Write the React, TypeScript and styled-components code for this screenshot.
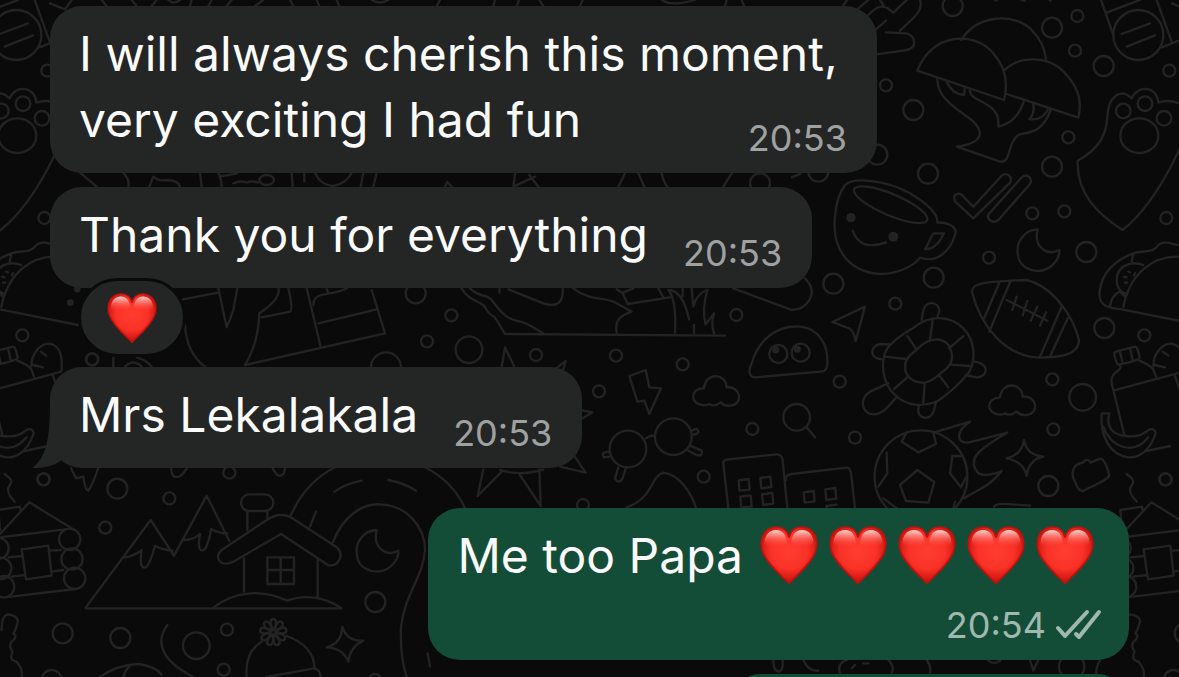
import React from "react";
import styled, { createGlobalStyle, css } from "styled-components";

const GlobalStyle = createGlobalStyle`
  *, *::before, *::after { box-sizing: border-box; }
  body {
    margin: 0;
    background: #0a0a0a;
    font-family: Inter, "Liberation Sans", sans-serif;
  }
`;

const Chat = styled.main`
  position: relative;
  height: 100vh;
  overflow: hidden;
  background: #0a0a0a;
`;

const WallpaperSvg = styled.svg`
  position: absolute;
  inset: 0;
  width: 100%;
  height: 100%;
  fill: none;
  stroke: #232323;
  stroke-width: 7;
  stroke-linecap: round;
  stroke-linejoin: round;
`;

const MessageList = styled.ol`
  position: relative;
  display: flex;
  flex-direction: column;
  gap: 14px;
  margin: 0;
  padding: 6px 50px 0;
  list-style: none;
`;

const MessageRow = styled.li<{ $outgoing?: boolean; $spaced?: boolean }>`
  display: flex;
  flex-direction: column;
  align-items: ${(p) => (p.$outgoing ? "flex-end" : "flex-start")};
  ${(p) => p.$spaced && css`margin-top: 26px;`}
`;

const Bubble = styled.article<{ $outgoing?: boolean; $layout?: "inline" | "multiline" | "stacked" }>`
  position: relative;
  display: grid;
  max-width: min(827px, 100%);
  padding: 15px 30px 20px 29px;
  border-radius: 32px;
  color: #fbfbfb;
  background: ${(p) => (p.$outgoing ? "#144d37" : "#242626")};
  ${(p) =>
    (p.$layout ?? "inline") === "inline" &&
    css`
      grid-template-columns: auto auto;
      column-gap: 35px;
    `}
  ${(p) =>
    p.$layout === "multiline" &&
    css`
      width: 827px;
      grid-template-columns: 1fr auto;
      & > :first-child { grid-column: 1 / -1; }
    `}
  ${(p) => p.$layout === "stacked" && css`row-gap: 22px;`}
`;

const NextBubble = styled.div`
  width: 400px;
  height: 101px;
  border-radius: 32px;
  background: #144d37;
`;

const Text = styled.p`
  display: flex;
  align-items: center;
  margin: 0;
  font-size: 48px;
  line-height: 66px;
`;

const Meta = styled.footer<{ $outgoing?: boolean }>`
  display: flex;
  align-items: center;
  justify-self: end;
  align-self: end;
  gap: 9px;
  font-size: 36px;
  line-height: 29px;
  color: ${(p) => (p.$outgoing ? "#a1b8af" : "#a0a1a1")};
`;

const EmojiRun = styled.span`
  display: inline-flex;
  margin: 0 0 2px 11px;
`;

const HeartSlot = styled.span<{ $small?: boolean }>`
  display: flex;
  justify-content: center;
  width: ${(p) => (p.$small ? 50 : 69)}px;
  svg { display: block; width: ${(p) => (p.$small ? 50 : 58)}px; height: ${(p) => (p.$small ? 50 : 58)}px; }
`;

const Reaction = styled.button`
  z-index: 1;
  display: flex;
  align-items: center;
  justify-content: center;
  width: 108px;
  height: 79px;
  margin: -10px 0 -4px 28px;
  padding: 0;
  border: 3px solid #0a0a0a;
  border-radius: 40px;
  background: #242626;
`;

const TailSvg = styled.svg`
  position: absolute;
  left: -18px;
  bottom: 0;
  width: 52px;
  height: 65px;
  fill: #242626;
`;

const ChecksSvg = styled.svg`
  width: 46px;
  height: 29px;
  margin-right: -2px;
  overflow: visible;
  fill: none;
  stroke: currentColor;
  stroke-width: 4;
  stroke-linecap: round;
  stroke-linejoin: round;
`;

const HEART =
  "M85 170C76 158 22 118 7 76C-6 36 14 3 48 3C66 3 80 14 85 34C90 14 104 3 122 3C156 3 176 36 163 76C148 118 94 158 85 170Z";

function HeartDefs() {
  return (
    <svg width="0" height="0" aria-hidden="true" style={{ position: "absolute" }}>
      <defs>
        <radialGradient id="heartBody" cx="50%" cy="42%" r="60%">
          <stop offset="0" stopColor="#ff3d32" />
          <stop offset="0.55" stopColor="#fa3227" />
          <stop offset="1" stopColor="#bd0c08" />
        </radialGradient>
        <linearGradient id="heartShine" x1="0" y1="0" x2="0" y2="1">
          <stop offset="0" stopColor="#ffe0dc" stopOpacity="0.95" />
          <stop offset="0.45" stopColor="#ff8f86" stopOpacity="0.6" />
          <stop offset="1" stopColor="#ff4238" stopOpacity="0" />
        </linearGradient>
      </defs>
    </svg>
  );
}

function Heart({ small }: { small?: boolean }) {
  return (
    <HeartSlot $small={small}>
      <svg viewBox="0 0 170 172" role="img" aria-label="Red heart">
        <path d={HEART} fill="url(#heartBody)" stroke="#c4100b" strokeWidth="5" />
        <path d="M12 54C12 27 26 12 47 12C66 12 77 27 79 52C60 64 27 66 12 54Z" fill="url(#heartShine)" />
        <path d="M158 54C158 27 144 12 123 12C104 12 93 27 91 52C110 64 143 66 158 54Z" fill="url(#heartShine)" />
      </svg>
    </HeartSlot>
  );
}

/* Doodles are drawn on a grid three times finer than the page. */
function Patch({ x, y, children }: { x: number; y: number; children: React.ReactNode }) {
  return <g transform={`translate(${x} ${y}) scale(0.33333)`}>{children}</g>;
}

function Rings({ r, at }: { r: number; at: [number, number][] }) {
  return (
    <>
      {at.map(([cx, cy]) => (
        <circle key={`${cx}-${cy}`} cx={cx} cy={cy} r={r} />
      ))}
    </>
  );
}

const MOON = "M713 688C670 690 645 730 655 770C660 800 690 812 715 813C750 812 780 780 778 750C740 770 700 740 713 688Z";
const CLOUD =
  "M595 523C560 520 555 475 600 472C605 425 665 425 668 470C710 465 720 520 680 525C665 527 655 520 650 515C635 527 620 525 617 520Q608 525 595 523Z";

function Wallpaper() {
  return (
    <WallpaperSvg viewBox="0 0 1179 677" preserveAspectRatio="xMinYMin slice" aria-hidden="true">
      <defs>
        <g id="doodles">
          <Patch x={0} y={0}>
            <path d="M305 0L320 18M395 0L410 18M455 18L470 0M505 0Q520 15 540 0M575 0L570 18M625 18L635 0M680 18L695 0M765 18L790 0M870 0L880 18M950 0L958 18M1010 0L1018 18M1115 0Q1140 15 1165 0" />
            <path d="M150 10L195 28L215 0" />
            <path d="M240 518L290 560M370 518Q390 540 385 560M448 560L460 530Q475 545 500 540Q535 540 540 560M600 518L605 560M655 518Q665 540 665 560M665 528Q690 525 710 520M700 550Q720 540 740 548Q755 540 775 548M875 520L878 560M913 520V545M945 518Q960 555 1000 558Q1040 550 1055 518M1090 518L1082 560M1130 518L1120 560" />
            <ellipse cx="800" cy="540" rx="22" ry="15" />
          </Patch>
          <Patch x={400} y={0}>
            <path d="M110 18L120 0M280 18L285 0M350 18L357 0M418 0L430 18M540 18L548 0M785 0Q815 20 885 0M975 18L980 0M1025 0L1032 18" />
            <path d="M345 520L340 560L405 530M388 525L415 560M135 560L142 545L155 560M655 560L675 520M715 520L733 560M785 520Q790 545 802 560M970 560L995 520M1175 532L1200 522" />
            <circle cx="1080" cy="550" r="30" />
          </Patch>

          <Patch x={800} y={0}>
            <Rings r={18} at={[[258, 256], [832, 48], [825, 152], [805, 412], [697, 640], [793, 634], [1108, 212], [1099, 654], [567, 773]]} />
            <Rings r={30} at={[[458, 18], [756, 83], [911, 198], [340, 330], [384, 521], [756, 500], [859, 756], [232, 464], [55, 515]]} />
            <circle cx="1015" cy="105" r="75" />
            <path d="M965 102L1050 70M980 140L1065 106M903 0L940 105M920 38L1020 0M1070 0L1115 125M1085 142L1150 116M585 0L590 2M665 0L675 2M748 0L752 2" />
            <path d="M130 15L142 0M175 25L205 0M205 45C240 10 250 20 262 24L280 38L320 0M240 0L250 15M360 0C370 30 350 45 300 92M257 97L320 100C350 110 350 145 320 150L230 163M228 88L258 62" />
            <path d="M352 212C395 100 520 90 580 160C615 200 625 250 612 300ZM484 120C530 45 640 35 695 90C725 120 735 150 738 178M612 212C660 165 750 165 800 225C840 270 845 310 835 353L620 282" />
            <path d="M412 235C410 300 480 330 520 365C555 400 545 430 470 440L600 485C635 490 620 430 655 405C680 395 725 405 752 330M440 245Q455 280 492 285L494 265M510 268C505 300 560 300 585 335Q597 350 595 380C640 370 660 340 672 302M700 312Q705 340 688 357C710 362 735 350 745 325" />
            <path d="M833 482C900 445 920 400 922 350C925 290 960 262 995 295C1010 255 1070 255 1075 308C1110 295 1170 310 1170 350C1165 400 1145 435 1130 465C1080 570 1020 650 968 690C890 640 830 580 833 482Z" />
            <Rings r={22} at={[[970, 333], [1035, 311], [1092, 355]]} />
            <ellipse cx="1018" cy="407" rx="57" ry="52" />
            <path d="M465 604C455 580 480 575 490 590L520 620L605 527C620 515 640 530 630 548L520 655ZM566 642L665 532C680 518 700 535 690 552L595 660C580 672 558 660 566 642Z" />
            <path d="M135 555C160 530 260 540 330 580C380 610 415 640 412 668C440 665 475 680 465 705C450 755 410 790 360 773C340 800 290 822 240 822C140 815 95 740 105 650C108 610 120 575 135 555Z" />
            <ellipse cx="272" cy="614" rx="119" ry="32" transform="rotate(23 272 614)" />
            <path d="M158 692Q180 755 258 727M400 700H432C420 725 400 750 375 747C385 735 390 715 400 700Z" />
            <g fill="#232323" stroke="none">
              <circle cx="153" cy="653" r="14" />
              <circle cx="280" cy="710" r="15" />
            </g>
            <path d={MOON} />
          </Patch>

          <Patch x={800} y={240}>
            <Rings r={30} at={[[100, 131], [401, 113], [913, 264], [745, 738]]} />
            <Rings r={18} at={[[286, 191], [119, 425], [757, 418], [760, 568], [1033, 286], [1097, 718], [165, 593], [1242, 358]]} />
            <circle cx="848" cy="472" r="40" />
            <path d="M900 150C905 100 945 60 1000 40C1030 30 1060 40 1075 15C1100 -5 1125 22 1150 15M900 150C890 200 930 205 965 208L1200 255M970 200C990 100 1060 45 1140 50M1030 75C990 60 950 80 950 120C950 140 960 155 975 160M930 198Q935 165 960 155L975 170M1000 40L995 65M972 110L980 112M985 95L990 97M975 128L982 128M1005 100L1002 106" />
            <path d="M517 160C512 130 540 125 680 120C760 140 820 230 837 300C835 350 770 352 720 353C610 350 540 250 517 160ZM600 124L550 240M632 122L568 275M785 200L720 350M803 235L750 350M620 180L742 242M650 170L637 210M682 183L668 226M712 200L692 242M738 217L720 257" />
            <path d="M97 246L195 200L167 303Q160 265 140 262Z" />
            <path d="M345 260C390 225 450 225 490 265C525 300 530 360 505 400C480 430 440 465 410 485C370 500 320 500 285 465C245 430 240 360 262 325C285 295 315 280 345 260ZM360 320C385 295 425 290 445 315C460 340 460 365 440 385C420 400 400 425 375 428C340 430 315 410 315 380C315 350 340 340 360 320Z" />
            <path d="M398 240L390 298M490 288L447 325M510 378L452 374M445 442L417 405M370 487L374 430M282 447L322 412M255 350L318 357M322 288L348 326M365 240L370 210C380 180 415 185 418 212L412 232M270 313L240 312C205 320 210 360 250 358M520 365C565 365 570 410 530 412L497 405M265 430L210 455C175 475 185 525 225 523C255 520 270 490 292 470M357 495C350 520 360 535 380 533C400 530 403 510 408 485" />
            <path d={CLOUD} />
            <circle cx="363" cy="710" r="139" />
            <path d="M320 577L305 605L355 637L408 612L400 577M352 690L403 726L385 788L318 783L300 735ZM260 638L262 700L235 740M487 648L457 648L450 700L483 742L499 710M250 775L290 805M465 785L460 805" />
            <path d="M400 578L510 545C470 570 465 610 505 608L622 578C530 630 500 660 535 700Q560 712 605 693C570 740 530 750 492 775" />
            <path d="M672 600Q680 645 730 650Q685 660 680 708Q672 665 620 655Q665 645 672 600Z" />
            <path d="M822 685C830 665 845 675 855 662Q865 655 872 668L900 656Q915 655 928 705C925 722 870 740 850 753Q835 755 825 725Q812 705 822 685M582 800Q590 790 620 792L690 797" />
            <path d="M943 342Q942 336 950 334L1005 320Q1012 318 1019 352Q1018 362 955 374Q948 372 943 342ZM960 336L968 368M990 325L998 360M960 375C970 395 930 390 935 430L973 585M1018 362Q1050 375 1060 388L1068 410M940 452L1150 395M1060 378C1060 340 1090 305 1120 312C1145 320 1155 350 1150 395M1088 335L1105 347M1065 375L1095 382M1125 408L1140 450M1040 633L1110 618" />
            <path d="M905 520H928Q915 570 960 585C1000 595 1030 585 1048 568Q1065 565 1067 580C1050 630 1020 655 985 652C930 645 900 590 905 520ZM910 560C930 620 1000 650 1045 592" />
            <path d="M980 702C1010 725 1000 725 990 745C990 770 1000 770 1010 785" />
          </Patch>

          <Patch x={400} y={260}>
            <Rings r={18} at={[[154, 166], [81, 244], [408, 285], [648, 287], [597, 394], [848, 313], [1009, 165], [1057, 507], [911, 650], [549, 735]]} />
            <circle cx="47" cy="100" r="30" />
            <circle cx="207" cy="269" r="40" />
            <path d="M1000 85L1175 150C1220 150 1260 100 1215 55" />
            <path d="M1065 352C1045 350 1045 330 1055 310C1075 240 1130 195 1200 200C1260 205 1285 260 1282 310Q1282 335 1262 335Z" />
            <Rings r={27} at={[[1135, 282], [1202, 278]]} />
            <g fill="#232323">
              <circle cx="1127" cy="270" r="7" />
              <circle cx="1192" cy="268" r="7" />
            </g>
            <path d={CLOUD} transform="translate(312 -88)" />
            <path d="M688 348L737 330L748 382L783 385L748 462L733 422L712 425Z" />
            <Rings r={55} at={[[684, 567], [820, 530]]} />
            <path d="M738 535Q750 525 765 528M875 512Q893 500 895 515Q890 525 878 524M870 557L905 572Q910 590 890 585L865 572M655 622L645 655Q655 675 668 655L678 622M630 575Q600 575 612 592L630 590" />
            <circle cx="1190" cy="472" r="40" />
            <path d="M1220 502L1245 532" />
            <path d="M315 222L975 227M185 85C210 130 250 120 260 150C275 175 280 160 290 180L315 222M210 85C240 115 260 100 275 120C320 180 330 175 350 182C390 190 400 205 430 220M325 88L430 130C480 145 490 120 488 85M298 85V98M520 85C570 125 620 110 650 130L695 155C650 170 645 190 650 218M650 88L668 100L683 132L810 112M668 98L700 85M775 85L790 112" />
            <path d="M805 90Q830 120 825 218M808 90Q850 95 867 178M848 85V108M875 85L880 140Q890 100 922 90Q905 150 917 193L942 160Q932 190 942 220M882 195V220" />
            <path d="M305 320L315 262L343 320M468 325L497 303L488 335M543 450L577 457L543 478M520 583L557 638L480 620M250 628L233 708L308 632M358 642L422 738L418 628M300 630Q360 650 430 628" />
            <path d="M680 742C760 715 750 650 790 638C840 645 875 700 888 745" />
            <path d="M985 745L970 610Q968 600 985 598L1130 583Q1145 583 1148 600L1162 745M1158 660Q1155 645 1175 642L1340 623Q1350 622 1353 640L1365 745" />
            <path d="M1016 661L1046 657L1049 689L1018 692ZM1081 654L1111 650L1114 681L1084 685ZM1021 710L1052 706L1055 740L1024 742ZM1086 703L1117 699L1120 731L1090 735ZM1211 697L1241 693L1244 724L1214 728ZM1276 688L1306 684L1309 716L1279 720ZM1280 745L1278 738L1310 734" />
          </Patch>

          <Patch x={0} y={270}>
            <g fill="#232323" stroke="none">
              <circle cx="232" cy="58" r="10" />
              <circle cx="211" cy="98" r="10" />
            </g>
            <circle cx="277" cy="268" r="18" />
            <path d="M548 88L655 68M655 55L680 172Q690 150 700 120L712 55M836 55Q840 90 778 130Q775 220 735 285M555 165Q560 250 615 290M785 142L870 125Q880 120 865 55M735 285L1155 190L1115 60M920 55L962 230M955 160L1130 118M940 105C940 60 1000 80 1040 55M980 58L985 68M340 290V262M375 290Q400 265 425 290M410 262Q440 270 455 290" />
            <circle cx="1158" cy="292" r="45" />
          </Patch>

          <Patch x={0} y={460}>
            <Rings r={18} at={[[130, 58], [688, 38], [508, 115], [316, 203], [681, 509], [671, 629], [1125, 660]]} />
            <Rings r={30} at={[[352, 86], [188, 520], [361, 534], [1126, 426], [155, 660]]} />
            <circle cx="589" cy="557" r="40" />
            <path d="M257 443L452 180L522 287L620 107L688 243M257 445H1025M372 292Q400 290 425 270C415 330 435 325 440 320C455 300 460 275 465 257Q490 270 517 272M552 240Q580 240 600 222C590 275 605 275 615 268C630 240 630 225 633 207Q655 220 682 220" />
            <rect x="723" y="103" width="97" height="50" rx="25" />
            <path d="M742 155V210M802 155V175M665 270L800 180Q845 150 885 180L1010 262C1035 285 1015 320 985 316L843 222L700 305C660 325 640 290 665 270ZM732 295V395M953 300V410M802 292H882V372H802ZM842 292V372M802 330H882M640 443C700 395 780 385 862 422C920 400 980 415 1022 443" />
            <path d={MOON} transform="translate(417 -478)" />
            <path d="M873 165C900 105 940 55 1005 22M1275 22C1330 50 1370 90 1395 145M1003 95Q1040 70 1085 62M1165 60Q1210 68 1248 92M930 200L948 155M998 248C1030 165 1090 130 1140 133C1220 135 1275 200 1275 270C1270 350 1215 400 1203 500C1200 570 1210 620 1220 651M1283 580L1290 620" />
            <path d="M213 25L228 55L250 50Q255 90 265 92Q280 70 295 22M513 25C515 60 540 60 560 25M818 25Q835 60 852 40L855 25" />
            <path d="M0 222L88 127L215 205M-5 150L60 140L62 152M-5 150L0 210M0 232L195 208M65 268L145 257L155 347L78 358ZM25 292L65 288M148 272L182 270M34 350L75 345M155 335L190 330M15 412L225 387" />
            <Rings r={32} at={[[209, 238], [216, 297], [224, 355], [-6, 265], [2, 325], [11, 380]]} />
            <path d="M5 510Q5 465 25 463Q60 470 52 490Q48 510 40 520Q55 530 35 545Q25 560 38 575Q25 600 50 605Q70 630 65 651" />
            <path d="M502 495C470 540 480 580 530 620Q560 640 578 650M300 651Q350 615 415 612Q470 620 485 645M370 651Q375 630 390 618" />
            <path d="M740 651C735 590 760 560 785 545M860 528C910 545 945 580 943 625Q960 630 962 651M800 651L943 625" />
            {[0, 40, 80, 120, 160, 200, 240, 280, 320].map((angle) => (
              <path key={angle} d="M820 510C810 495 808 478 820 477C832 478 830 495 820 510" transform={`rotate(${angle} 820 517)`} />
            ))}
            <path d="M1027 500Q1040 545 1090 542Q1050 560 1045 605Q1030 565 980 562Q1025 550 1027 500Z" />
          </Patch>

          <Patch x={740} y={500}>
            <path d="M100 480Q100 515 118 515Q130 510 128 480M190 480Q205 515 235 512M300 520Q290 490 320 480M335 505L345 495M370 490H385M445 480Q465 500 455 520M560 480Q575 500 570 520M745 482Q760 495 780 482M870 480L880 512L895 480M1080 480Q1060 520 1075 530" />
            <circle cx="995" cy="500" r="38" />
          </Patch>
        </g>
      </defs>
      <use href="#doodles" />
      <use href="#doodles" x="1122" />
      <use href="#doodles" x="-1122" />
    </WallpaperSvg>
  );
}

function Checks() {
  return (
    <ChecksSvg viewBox="0 1 46 29" role="img" aria-label="Delivered">
      <path d="M3 18L10 26L32 2M21 24L24 27L44 2" />
    </ChecksSvg>
  );
}

export default function App() {
  return (
    <Chat>
      <GlobalStyle />
      <HeartDefs />
      <Wallpaper />
      <MessageList>
        <MessageRow>
          <Bubble $layout="multiline">
            <Text>I will always cherish this moment,</Text>
            <Text>very exciting I had fun</Text>
            <Meta><time>20:53</time></Meta>
          </Bubble>
        </MessageRow>
        <MessageRow>
          <Bubble>
            <Text>Thank you for everything</Text>
            <Meta><time>20:53</time></Meta>
          </Bubble>
          <Reaction type="button" aria-label="Heart reaction">
            <Heart small />
          </Reaction>
        </MessageRow>
        <MessageRow>
          <Bubble>
            <TailSvg viewBox="0 0 156 195" aria-hidden="true">
              <path d="M54 0C54 100 44 165 1 194C36 198 72 186 89 170L130 120V0Z" />
            </TailSvg>
            <Text>Mrs Lekalakala</Text>
            <Meta><time>20:53</time></Meta>
          </Bubble>
        </MessageRow>
        <MessageRow $outgoing $spaced>
          <Bubble $outgoing $layout="stacked">
            <Text>
              Me too Papa
              <EmojiRun>
                <Heart /><Heart /><Heart /><Heart /><Heart />
              </EmojiRun>
            </Text>
            <Meta $outgoing><time>20:54</time><Checks /></Meta>
          </Bubble>
        </MessageRow>
        <MessageRow $outgoing>
          <NextBubble aria-hidden="true" />
        </MessageRow>
      </MessageList>
    </Chat>
  );
}
